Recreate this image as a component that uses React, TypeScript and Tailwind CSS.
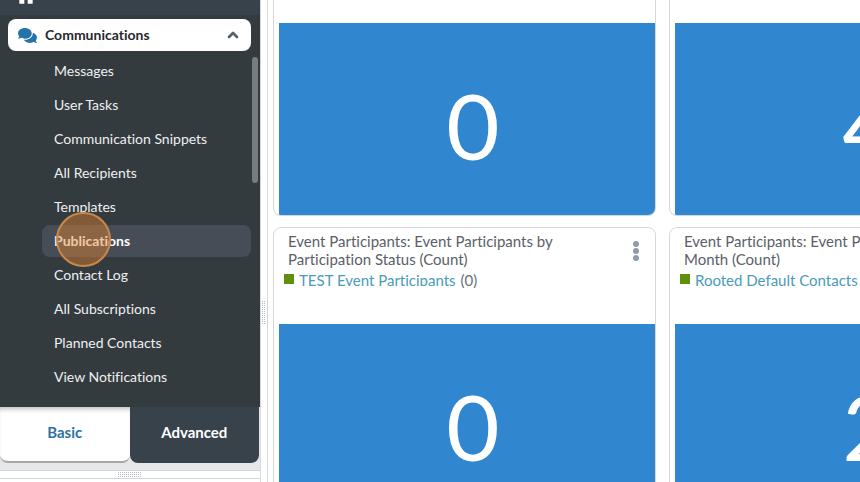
import { FaComments, FaHome } from "react-icons/fa"
import { ChevronUp } from "lucide-react"

interface Widget {
  title: string
  source: string
  count: number
  value: string
}

const navItems = [
  "Messages",
  "User Tasks",
  "Communication Snippets",
  "All Recipients",
  "Templates",
  "Publications",
  "Contact Log",
  "All Subscriptions",
  "Planned Contacts",
  "View Notifications",
]

const widgets: Widget[] = [
  {
    title: "Event Participants: Event Participants by Participation Status (Count)",
    source: "TEST Event Participants",
    count: 0,
    value: "0",
  },
  {
    title: "Event Participants: Event Participants by Month (Count)",
    source: "Rooted Default Contacts",
    count: 2,
    value: "2",
  },
]

function NavItem({ label, active }: { label: string; active: boolean }) {
  return (
    <li>
      <a
        href="#"
        className={
          active
            ? "relative flex h-8 items-center rounded-lg bg-[#474d56] pl-3 font-bold text-white"
            : "flex h-8 items-center pl-3 text-[#eef0f1]"
        }
      >
        {label}
        {active && (
          <span className="absolute -top-[13px] left-[14px] size-[55px] rounded-full border-2 border-[#c9884a] bg-[#e08330]/45" />
        )}
      </a>
    </li>
  )
}

// dotted handle on the pane splitters
function Grip({ className }: { className: string }) {
  return (
    <span
      className={`${className} bg-[radial-gradient(circle_at_0_0,#b3bec9_50%,transparent_50%)] bg-[length:2px_2px]`}
    />
  )
}

function Sidebar() {
  return (
    <aside className="flex w-[260px] shrink-0 flex-col bg-[#e5e7e8]">
      <div className="flex h-[407px] flex-col overflow-hidden bg-[#343b3f]">
        <div className="flex h-[15px] shrink-0 items-start bg-[#37424b] pl-4">
          <FaHome className="-mt-[14px] size-5 text-white" />
        </div>
        <button className="mr-[9px] ml-2 mt-1 flex h-8 shrink-0 items-center rounded-lg bg-white px-[10px] text-sm font-bold text-[#25292c]">
          <FaComments className="size-[19px] text-[#2474a9]" />
          <span className="ml-2">Communications</span>
          <ChevronUp className="ml-auto size-4 text-[#5a6068]" strokeWidth={4} />
        </button>
        <div className="flex pt-1">
          <ul className="ml-[42px] flex grow flex-col gap-[2px] text-sm">
            {navItems.map((label) => (
              <NavItem key={label} label={label} active={label === "Publications"} />
            ))}
          </ul>
          <div className="mt-[2px] mr-[2px] ml-px h-[126px] w-[6px] rounded-full bg-[#777c80]" />
        </div>
      </div>
      <div className="mr-px flex h-14 shrink-0 text-[15px]">
        <button className="flex-1 rounded-b-lg border-b-2 border-[#a5a8aa] bg-white pb-1 font-bold text-[#2e73a3] shadow-[inset_0_5px_5px_-3px_#bbbbbb]">
          Basic
        </button>
        <button className="flex-1 rounded-b-lg bg-[#37424b] pb-[6px] font-bold text-white">Advanced</button>
      </div>
      <div className="mt-[7px] flex h-[9px] shrink-0 items-center justify-center border-y border-[#d3d6d8] bg-white">
        <Grip className="h-[5px] w-6" />
      </div>
      <div className="grow bg-white" />
    </aside>
  )
}

function CountTile({ value }: { value: string }) {
  return (
    <div className="ml-[5px] flex h-48 items-center justify-center bg-[#3086cf] pt-3 pl-3 text-[92px] leading-none text-white">
      {value}
    </div>
  )
}

function WidgetCard({ title, source, count, value }: Widget) {
  return (
    <section className="w-[383px] shrink-0 overflow-hidden rounded-lg border border-[#d5d8da] bg-white">
      <div className="flex h-24 flex-col">
        <div className="flex items-start justify-between pt-1 pr-4 pl-[14px]">
          <h2 className="w-[290px] text-[15px] leading-[18px] text-[#5b6069]">{title}</h2>
          <button aria-label="Widget options" className="mt-[9px] flex flex-col gap-px">
            <span className="size-[6px] rounded-full bg-[#8f9bab]" />
            <span className="size-[6px] rounded-full bg-[#8f9bab]" />
            <span className="size-[6px] rounded-full bg-[#8f9bab]" />
          </button>
        </div>
        <div className="flex items-start pt-[3px] pl-[10px] text-[15px] leading-[18px] text-[#6b7078]">
          <span className="mt-[3px] size-[10px] shrink-0 bg-[#5f8f0b]" />
          <a href="#" className="ml-[5px] h-[15px] overflow-hidden text-[#4a9bba]">
            {source}
          </a>
          <span className="ml-[5px]">({count})</span>
        </div>
      </div>
      <CountTile value={value} />
    </section>
  )
}

export default function App() {
  return (
    <div className="flex h-screen overflow-hidden bg-white [font-family:Lato,sans-serif] [font-variant-ligatures:none]">
      <Sidebar />
      <div className="flex w-2 shrink-0 items-center justify-center border-x border-[#d3d9dc] pt-36">
        <Grip className="h-6 w-1" />
      </div>
      <main className="flex min-w-0 grow flex-col gap-[11px] overflow-hidden pl-[5px]">
        <div className="flex shrink-0 gap-[13px]">
          {["0", "4"].map((value) => (
            <section
              key={value}
              className="w-[383px] shrink-0 overflow-hidden rounded-b-lg border border-t-0 border-[#d5d8da] pt-[23px]"
            >
              <CountTile value={value} />
            </section>
          ))}
        </div>
        <div className="flex shrink-0 gap-[13px]">
          {widgets.map((widget) => (
            <WidgetCard key={widget.value} {...widget} />
          ))}
        </div>
      </main>
    </div>
  )
}
